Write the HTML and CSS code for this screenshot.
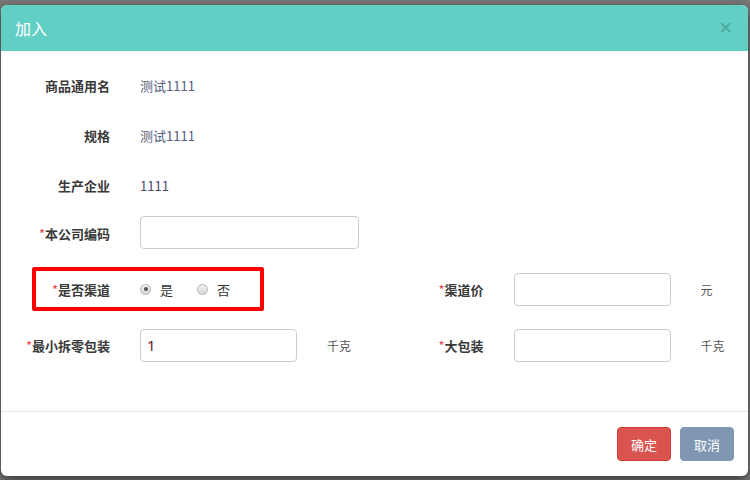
FILE: index.html
```html
<!DOCTYPE html>
<html lang="zh">
<head>
<meta charset="utf-8">
<title>加入</title>
<link rel="stylesheet" href="styles.css">
</head>
<body>
<div class="modal">
  <div class="modal-header">
    <span class="title">加入</span>
    <span class="close">×</span>
  </div>
  <div class="modal-body">
    <div class="row r1">
      <div class="cell"><label class="lbl">商品通用名</label><span class="val">测试1111</span></div>
    </div>
    <div class="row r2">
      <div class="cell"><label class="lbl">规格</label><span class="val">测试1111</span></div>
    </div>
    <div class="row r3">
      <div class="cell"><label class="lbl">生产企业</label><span class="val num">1111</span></div>
    </div>
    <div class="row r4">
      <div class="cell"><label class="lbl"><i>*</i>本公司编码</label><input class="inp wide" type="text"></div>
    </div>
    <div class="row r5">
      <div class="cell half">
        <label class="lbl"><i>*</i>是否渠道</label>
        <span class="radio checked"></span><span class="rtext">是</span>
        <span class="radio"></span><span class="rtext">否</span>
      </div>
      <div class="cell half">
        <label class="lbl"><i>*</i>渠道价</label><input class="inp" type="text"><span class="unit">元</span>
      </div>
      <div class="mark"></div>
    </div>
    <div class="row r6">
      <div class="cell half">
        <label class="lbl"><i>*</i>最小拆零包装</label><input class="inp" type="text" value="1"><span class="unit">千克</span>
      </div>
      <div class="cell half">
        <label class="lbl"><i>*</i>大包装</label><input class="inp" type="text"><span class="unit">千克</span>
      </div>
    </div>
  </div>
  <div class="modal-footer">
    <button class="btn ok">确定</button>
    <button class="btn cancel">取消</button>
  </div>
</div>
</body>
</html>
```

FILE: styles.css
```css
html, body {
  margin: 0;
  padding: 0;
}
body {
  width: 750px;
  height: 480px;
  overflow: hidden;
  background: #787878;
  font-family: "Noto Sans CJK SC", "Noto Sans", sans-serif;
  padding-top: 5px;
  box-sizing: border-box;
}
.modal {
  margin-left: 1px;
  width: 747px;
  background: #fff;
  border-radius: 6px;
  box-shadow: 0 4px 12px rgba(0, 0, 0, 0.55);
  overflow: hidden;
}
.modal-header {
  height: 46px;
  background: #62cfc5;
  display: flex;
  align-items: center;
  justify-content: space-between;
  padding: 0 16px 0 14px;
}
.title {
  color: #fff;
  font-size: 16px;
  line-height: 1;
}
.close {
  color: #4aa59e;
  font-family: "Liberation Sans", sans-serif;
  font-size: 22px;
  line-height: 1;
}
.modal-body {
  height: 360px;
  box-sizing: border-box;
  padding-top: 17px;
  position: relative;
}
.row {
  display: flex;
  height: 34px;
  position: relative;
}
.r2, .r3 { margin-top: 16px; }
.r4 { margin-top: 14px; }
.r5, .r6 { margin-top: 22px; }
.cell {
  display: flex;
  align-items: center;
  font-size: 13px;
}
.half {
  width: 374px;
}
.lbl {
  width: 109px;
  margin-right: 30px;
  text-align: right;
  font-weight: 700;
  color: #3a3a3a;
  flex-shrink: 0;
}
.lbl i {
  font-style: normal;
  font-weight: 400;
  color: #ee4444;
}
.val {
  color: #55607e;
}
.num {
  color: #4b4866;
}
.inp {
  width: 157px;
  height: 33px;
  box-sizing: border-box;
  border: 1px solid #cccccc;
  border-radius: 4px;
  padding: 0 6px;
  font-family: "Noto Sans", sans-serif;
  font-size: 15px;
  color: #5a2323;
  outline: none;
}
.inp.wide {
  width: 219px;
}
.r4 .inp { margin-top: -2px; }
.unit {
  margin-left: 30px;
  color: #555;
  font-size: 12px;
}
.radio {
  width: 11px;
  height: 11px;
  border-radius: 50%;
  border: 1px solid #b5b5b5;
  background: linear-gradient(#f0f0f0, #d8d8d8);
  box-sizing: border-box;
  position: relative;
  margin-right: 9px;
}
.radio.checked::after {
  content: "";
  position: absolute;
  left: 2.5px;
  top: 2.5px;
  width: 4px;
  height: 4px;
  border-radius: 50%;
  background: #555;
}
.rtext {
  color: #333;
  margin-right: 24px;
}
.mark {
  position: absolute;
  left: 31px;
  top: -5px;
  width: 232px;
  height: 44px;
  box-sizing: border-box;
  border: 4px solid #ff0000;
  border-radius: 2px;
}
.modal-footer {
  border-top: 1px solid #e5e5e5;
  padding: 15px 14px 15px 15px;
  display: flex;
  justify-content: flex-end;
  gap: 9px;
}
.btn {
  width: 54px;
  height: 34px;
  border-radius: 4px;
  font-family: "Noto Sans CJK SC", sans-serif;
  font-size: 13px;
  color: #fff;
  padding: 0;
}
.ok {
  background: #d9534f;
  border: 1px solid #d43f3a;
}
.cancel {
  background: #7f97b2;
  border: 1px solid #7f97b2;
}
```
